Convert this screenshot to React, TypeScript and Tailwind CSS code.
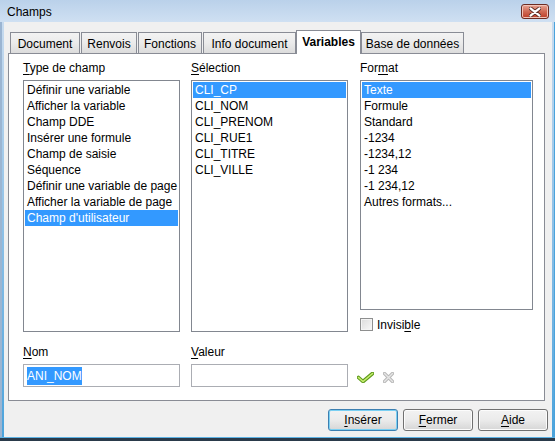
import type { ReactNode } from 'react';

const typeItems = [
  'Définir une variable',
  'Afficher la variable',
  'Champ DDE',
  'Insérer une formule',
  'Champ de saisie',
  'Séquence',
  'Définir une variable de page',
  'Afficher la variable de page',
  "Champ d'utilisateur",
];

const selectionItems = ['CLI_CP', 'CLI_NOM', 'CLI_PRENOM', 'CLI_RUE1', 'CLI_TITRE', 'CLI_VILLE'];

const formatItems = [
  'Texte',
  'Formule',
  'Standard',
  '-1234',
  '-1234,12',
  '-1 234',
  '-1 234,12',
  'Autres formats...',
];

const tabs = [
  { label: 'Document', w: 'w-[70px]', ml: 'ml-[2px]' },
  { label: 'Renvois', w: 'w-[56px]', ml: 'ml-px' },
  { label: 'Fonctions', w: 'w-[64px]', ml: 'ml-px' },
  { label: 'Info document', w: 'w-[93px]', ml: 'ml-px' },
  { label: 'Variables', w: 'w-[65px]', ml: 'ml-0', active: true },
  { label: 'Base de données', w: 'w-[103px]', ml: 'ml-0' },
];

function Mn({ children }: { children: ReactNode }) {
  return <span className="underline underline-offset-2">{children}</span>;
}

function ListBox({
  items,
  selected,
  className,
}: {
  items: string[];
  selected: number;
  className: string;
}) {
  return (
    <div className={`bg-white border border-[#828790] p-px ${className}`}>
      {items.map((item, i) => (
        <div
          key={item}
          className={`h-[16px] leading-[16px] pl-[2px] whitespace-nowrap ${
            i === selected ? 'bg-[#3399ff] text-white' : 'text-black'
          }`}
        >
          {item}
        </div>
      ))}
    </div>
  );
}

function Button({ children, primary }: { children: ReactNode; primary?: boolean }) {
  return (
    <div
      className={`w-[70px] h-[22px] rounded-[3px] flex items-center justify-center border bg-gradient-to-b from-[#f2f2f2] via-[#ebebeb] to-[#d6d6d6] ${
        primary ? 'border-[#3c7fb1] shadow-[inset_0_0_0_1px_#7ad0f3]' : 'border-[#707070] shadow-[inset_0_0_0_1px_#fcfcfc]'
      }`}
    >
      {children}
    </div>
  );
}

function CloseButton() {
  return (
    <div className="w-[28px] h-[15px] rounded-[3px] border border-[#6d2c22] bg-gradient-to-b from-[#e8a493] via-[#cf6a55] to-[#bd3b25] flex items-center justify-center shadow-[inset_0_0_0_1px_#f2c4b8]">
      <svg width="12" height="10" viewBox="0 0 12 10">
        <path
          d="M1 1 L11 9 M11 1 L1 9"
          stroke="#5a2a22"
          strokeWidth="4"
          strokeLinecap="round"
        />
        <path d="M1.5 1.3 L10.5 8.7 M10.5 1.3 L1.5 8.7" stroke="#ffffff" strokeWidth="2.2" strokeLinecap="round" />
      </svg>
    </div>
  );
}

function CheckIcon() {
  return (
    <svg width="17" height="11" viewBox="0 0 17 11">
      <path
        d="M1.5 5.5 L6 9.5 L15.5 1.5"
        fill="none"
        stroke="#5f9a1c"
        strokeWidth="3.6"
        strokeLinecap="round"
        strokeLinejoin="round"
      />
      <path
        d="M1.5 5.5 L6 9.5 L15.5 1.5"
        fill="none"
        stroke="#c8ef72"
        strokeWidth="1.6"
        strokeLinecap="round"
        strokeLinejoin="round"
      />
    </svg>
  );
}

function CrossIcon() {
  return (
    <svg width="11" height="11" viewBox="0 0 11 11">
      <path d="M1.5 1.5 L9.5 9.5 M9.5 1.5 L1.5 9.5" stroke="#b9b9b9" strokeWidth="3.4" strokeLinecap="round" />
      <path d="M1.5 1.5 L9.5 9.5 M9.5 1.5 L1.5 9.5" stroke="#e6e6e6" strokeWidth="1.4" strokeLinecap="round" />
    </svg>
  );
}

export default function App() {
  return (
    <div className="w-[555px] h-[441px] flex flex-col overflow-hidden bg-[#bcd3eb] text-[12px] leading-[16px] text-black font-['Liberation_Sans',Arial,sans-serif] select-none">
      {/* title bar */}
      <div className="h-[22px] shrink-0 flex items-center justify-between pl-[7px] pr-[6px] bg-gradient-to-b from-[#bad1ea] to-[#cfe0f2]">
        <span className="text-[12px] mt-[2px]">Champs</span>
        <div className="mt-px">
          <CloseButton />
        </div>
      </div>

      <div className="flex flex-1 min-h-0">
        <div className="w-[4px] flex">
          <div className="w-[2px] bg-[#9bb5d2]" />
          <div className="w-[2px] bg-gradient-to-b from-[#c7dbef] to-[#4aa3dc]" />
        </div>

        {/* client area */}
        <div className="flex-1 bg-[#f0f0f0] flex flex-col pl-[4px] pr-[7px]">
          {/* tabs */}
          <div className="h-[23px] flex items-end mt-[8px]">
            {tabs.map((t) =>
              t.active ? (
                <div
                  key={t.label}
                  className={`${t.w} ${t.ml} h-[24px] -mb-px relative z-10 bg-white border border-[#898c95] border-b-0 flex items-center justify-center font-bold`}
                >
                  <span className="-mt-[2px]">{t.label}</span>
                </div>
              ) : (
                <div
                  key={t.label}
                  className={`${t.w} ${t.ml} h-[21px] bg-gradient-to-b from-[#f3f3f3] via-[#ebebeb] to-[#dcdcdc] border border-[#898c95] border-b-0 flex items-center justify-center`}
                >
                  <span className="mt-px">{t.label}</span>
                </div>
              )
            )}
          </div>

          {/* panel */}
          <div className="h-[348px] bg-white border border-[#898c95] pt-[6px] pl-[14px] pr-[11px] flex flex-col">
            <div className="flex">
              <div className="w-[157px] flex flex-col">
                <div className="h-[16px] mb-[4px]">
                  <Mn>T</Mn>ype de champ
                </div>
                <ListBox items={typeItems} selected={8} className="h-[252px]" />
              </div>
              <div className="w-[157px] ml-[11px] flex flex-col">
                <div className="h-[16px] mb-[4px]">
                  <Mn>S</Mn>élection
                </div>
                <ListBox items={selectionItems} selected={0} className="h-[252px]" />
              </div>
              <div className="w-[173px] ml-[12px] flex flex-col">
                <div className="h-[16px] mb-[4px]">
                  For<Mn>m</Mn>at
                </div>
                <ListBox items={formatItems} selected={0} className="h-[230px]" />
                <div className="flex items-center mt-[8px] h-[13px]">
                  <div className="w-[13px] h-[13px] border border-[#8e8f8f] bg-gradient-to-br from-[#dcdcdc] to-[#f8f8f8] shadow-[inset_0_0_0_1px_#f4f4f4]" />
                  <span className="ml-[4px]">
                    Invisi<Mn>b</Mn>le
                  </span>
                </div>
              </div>
            </div>

            <div className="flex mt-[12px]">
              <div className="w-[157px] flex flex-col">
                <div className="h-[16px] mb-[4px]">
                  <Mn>N</Mn>om
                </div>
                <div className="h-[23px] border border-[#abadb3] bg-white flex items-center pl-[3px]">
                  <span className="bg-[#3399ff] text-white leading-[18px]">ANI_NOM</span>
                </div>
              </div>
              <div className="w-[157px] ml-[11px] flex flex-col">
                <div className="h-[16px] mb-[4px]">
                  <Mn>V</Mn>aleur
                </div>
                <div className="h-[23px] border border-[#abadb3] bg-white" />
              </div>
              <div className="flex items-center mt-[28px] ml-[9px] h-[11px] gap-[9px]">
                <CheckIcon />
                <CrossIcon />
              </div>
            </div>
          </div>

          {/* buttons */}
          <div className="flex justify-end gap-[5px] mt-[8px] -mr-[3px]">
            <Button primary>
              <Mn>I</Mn>nsérer
            </Button>
            <Button>
              <Mn>F</Mn>ermer
            </Button>
            <Button>
              <Mn>A</Mn>ide
            </Button>
          </div>
        </div>

        <div className="w-[4px] flex">
          <div className="w-[2px] bg-gradient-to-b from-[#c7dbef] to-[#4aa3dc]" />
          <div className="w-[2px] bg-[#4aa3dc]" />
        </div>
      </div>

      <div className="h-[4px] shrink-0 flex flex-col">
        <div className="h-[1px] bg-[#5db2e4]" />
        <div className="h-[3px] bg-[#2a3a4a]" />
      </div>
    </div>
  );
}
